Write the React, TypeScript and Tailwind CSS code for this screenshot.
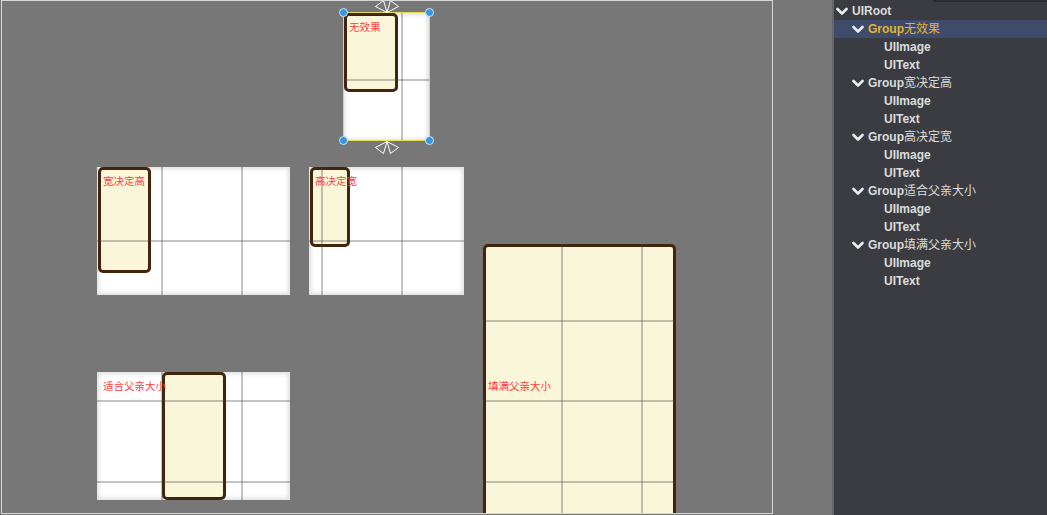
import React from 'react';

// global scene grid (only shows through the white panels)
const GX = [82, 162, 242, 322, 402, 482, 562, 642, 722];
const GY = [80, 160, 241, 321, 401, 482];

type Box = { x: number; y: number; w: number; h: number };

const GridLines: React.FC<{ box: Box }> = ({ box }) => {
  const xs = GX.filter((g) => g > box.x + 3 && g < box.x + box.w - 3);
  const ys = GY.filter((g) => g > box.y + 3 && g < box.y + box.h - 3);
  return (
    <>
      {xs.map((g) => (
        <div key={'x' + g} className="absolute top-0 bottom-0 w-[2px] bg-[rgba(60,60,60,0.3)]" style={{ left: g - 1 - box.x }} />
      ))}
      {ys.map((g) => (
        <div key={'y' + g} className="absolute left-0 right-0 h-[2px] bg-[rgba(60,60,60,0.3)]" style={{ top: g - 1 - box.y }} />
      ))}
    </>
  );
};

const cardCls = 'absolute bg-[#faf6d9] border-[3px] border-[#43250e] rounded-[5px]';
const labelCls =
  'absolute whitespace-nowrap text-[10.5px] leading-[12px] text-[#ff3d3d] font-["Noto_Sans_CJK_SC",sans-serif]';
const panelCls = 'absolute bg-white shadow-[inset_0_0_4px_2px_rgba(0,0,0,0.13)]';

const Anchor: React.FC<{ flip?: boolean; className: string }> = ({ flip, className }) => (
  <svg width="26" height="13" viewBox="0 0 26 13" className={className}>
    <g fill="none" stroke="#ffffff" strokeWidth="1" transform={flip ? 'translate(0 13) scale(1 -1)' : undefined}>
      <polygon points="1.5,6.5 9.5,0.5 13,12.5" />
      <polygon points="24.5,6.5 16.5,0.5 13,12.5" />
    </g>
  </svg>
);

const Handle: React.FC<{ className: string }> = ({ className }) => (
  <div className={`absolute w-[9px] h-[9px] rounded-full bg-[#3597e2] border border-[#cfe6f7] ${className}`} />
);

const Scene = () => (
  <div className="relative w-[832px] h-[515px] overflow-hidden">
    <div className="absolute left-0 top-0 w-[773px] h-[513px] overflow-hidden">
      {/* Group无效果 */}
      <div className={`${panelCls} left-[343px] top-[13px] w-[86px] h-[128px]`}>
        <div className={`${cardCls} left-[1px] top-0 w-[54px] h-[79px]`} />
        <GridLines box={{ x: 343, y: 13, w: 86, h: 128 }} />
        <span className={`${labelCls} left-[6px] top-[8px]`}>无效果</span>
      </div>
      <div className="absolute left-[343px] top-[12px] w-[87px] h-[129px] border border-[#e4dc52]" />
      <Handle className="left-[339px] top-[8px]" />
      <Handle className="left-[425px] top-[8px]" />
      <Handle className="left-[339px] top-[136px]" />
      <Handle className="left-[425px] top-[136px]" />
      <Anchor className="absolute left-[374px] top-0" />
      <Anchor flip className="absolute left-[374px] top-[141px]" />

      {/* Group宽决定高 */}
      <div className={`${panelCls} left-[97px] top-[167px] w-[193px] h-[128px]`}>
        <div className={`${cardCls} left-[1px] top-0 w-[53px] h-[106px]`} />
        <GridLines box={{ x: 97, y: 167, w: 193, h: 128 }} />
        <span className={`${labelCls} left-[6px] top-[8px]`}>宽决定高</span>
      </div>

      {/* Group高决定宽 */}
      <div className={`${panelCls} left-[309px] top-[167px] w-[155px] h-[128px]`}>
        <div className={`${cardCls} left-[1px] top-0 w-[40px] h-[80px]`} />
        <GridLines box={{ x: 309, y: 167, w: 155, h: 128 }} />
        <span className={`${labelCls} left-[6px] top-[8px]`}>高决定宽</span>
      </div>

      {/* Group适合父亲大小 */}
      <div className={`${panelCls} left-[97px] top-[372px] w-[193px] h-[128px]`}>
        <div className={`${cardCls} left-[65px] top-0 w-[64px] h-[128px]`} />
        <GridLines box={{ x: 97, y: 372, w: 193, h: 128 }} />
        <span className={`${labelCls} left-[6px] top-[8px]`}>适合父亲大小</span>
      </div>

      {/* Group填满父亲大小 */}
      <div className="absolute left-[483px] top-[244px] w-[193px] h-[300px]">
        <div className={`${cardCls} inset-0`} />
        <GridLines box={{ x: 483, y: 244, w: 193, h: 300 }} />
        <span className={`${labelCls} left-[5px] top-[136px]`}>填满父亲大小</span>
      </div>
    </div>
    {/* canvas frame */}
    <div className="absolute left-[1px] top-0 w-[772px] h-[514px] border border-[#d6d6d6] pointer-events-none" />
  </div>
);

type Node = { name: string; cjk?: string; depth: number; open?: boolean; selected?: boolean };

const groups = ['无效果', '宽决定高', '高决定宽', '适合父亲大小', '填满父亲大小'];
const nodes: Node[] = [
  { name: 'UIRoot', depth: 0, open: true },
  ...groups.flatMap((g, i) => [
    { name: 'Group', cjk: g, depth: 1, open: true, selected: i === 0 },
    { name: 'UIImage', depth: 2 },
    { name: 'UIText', depth: 2 },
  ]),
];

const Chevron = () => (
  <svg width="12" height="9" viewBox="0 0 12 9" className="shrink-0">
    <polyline points="1.5,2 6,6.5 10.5,2" fill="none" stroke="#ececec" strokeWidth="2.6" strokeLinecap="round" strokeLinejoin="round" />
  </svg>
);

const Hierarchy = () => (
  <div className="relative flex-1 h-full bg-[#3b3c41] pt-[2px] font-['Liberation_Sans','Noto_Sans_CJK_SC',sans-serif]">
    <div className="absolute right-0 top-0 w-[114px] h-[2px] bg-[#2a2b2f]" />
    {nodes.map((n, i) => (
      <div
        key={i}
        className={`flex items-center gap-[4px] h-[18px] text-[12px] ${
          n.selected ? 'bg-[#3f4b6b] text-[#e3b42c]' : 'text-[#dcdcdc]'
        } ${n.depth === 0 ? 'pl-[2px]' : n.depth === 1 ? 'pl-[18px]' : 'pl-[50px]'}`}
      >
        {n.open && <Chevron />}
        <span className="leading-none">
          <span className="font-bold">{n.name}</span>
          {n.cjk && <span className="font-normal">{n.cjk}</span>}
        </span>
      </div>
    ))}
  </div>
);

export default function App() {
  return (
    <div className="flex w-[1047px] h-[515px] overflow-hidden bg-[#777777]">
      <Scene />
      <div className="w-[2px] h-full bg-[#666668]" />
      <Hierarchy />
    </div>
  );
}
